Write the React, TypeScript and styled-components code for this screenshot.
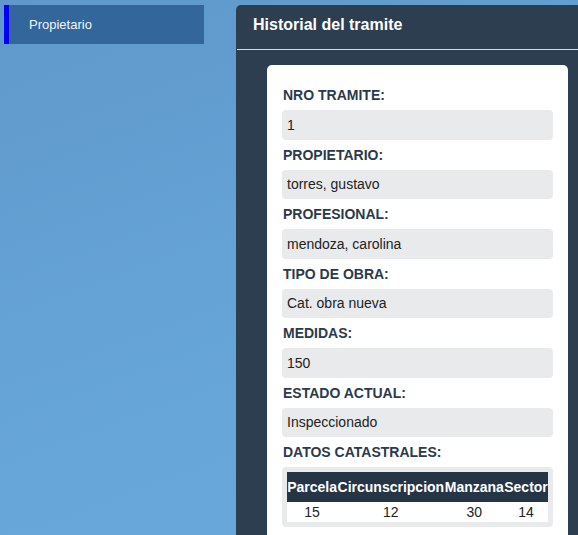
import React from "react";
import styled, { createGlobalStyle } from "styled-components";

const Global = createGlobalStyle`
  html, body { margin: 0; padding: 0; }
  body {
    font-family: "Liberation Sans", Arial, sans-serif;
    background: linear-gradient(160deg, #6098cb 0%, #66a5d8 60%, #68a9dc 100%);
    min-height: 535px;
    overflow: hidden;
  }
`;

const Page = styled.div`
  display: flex;
  align-items: flex-start;
  gap: 32px;
  padding: 5px 0 0 4px;
  height: 530px;
  width: 574px;
`;

const Sidebar = styled.nav`
  flex: 0 0 200px;
  display: flex;
  flex-direction: column;
`;

const NavItem = styled.div<{ $active?: boolean }>`
  height: 39px;
  display: flex;
  align-items: center;
  padding-left: 20px;
  background: #33669a;
  border-left: 5px solid ${(p) => (p.$active ? "#0000ff" : "transparent")};
  color: #f2f5f8;
  font-size: 13px;
`;

const Panel = styled.section`
  flex: 1 1 auto;
  min-width: 0;
  background: #2d3e50;
  border-radius: 5px 0 0 0;
  min-height: 540px;
`;

const PanelHeader = styled.h2`
  margin: 0 0 0 1px;
  padding: 10px 16px 15px;
  line-height: 19px;
  font-size: 16px;
  font-weight: bold;
  color: #ffffff;
  border-bottom: 1px solid #d5dbe1;
`;

const PanelBody = styled.div`
  padding: 15px 0 0 31px;
`;

const Card = styled.div`
  width: 271px;
  background: #ffffff;
  border-radius: 5px;
  padding: 15px 15px 15px;
`;

const Label = styled.div`
  height: 30px;
  display: flex;
  align-items: center;
  padding-left: 1px;
  font-size: 14px;
  font-weight: bold;
  color: #2b3a4b;
`;

const Value = styled.div`
  height: 29.5px;
  display: flex;
  align-items: center;
  padding: 0 5px;
  background: #e9eaec;
  border-radius: 4px;
  font-size: 14px;
  color: #222;
`;

const TableBox = styled.div`
  background: #e9eaec;
  border-radius: 4px;
  padding: 5px;
`;

const Table = styled.table`
  width: 100%;
  border-collapse: collapse;
  font-size: 14px;
`;

const Th = styled.th`
  background: #263546;
  color: #ffffff;
  font-weight: bold;
  height: 30px;
  padding: 0;
  text-align: center;
`;

const Td = styled.td`
  background: #ffffff;
  color: #222;
  height: 20px;
  padding: 0;
  text-align: center;
`;

const fields: [string, string][] = [
  ["NRO TRAMITE:", "1"],
  ["PROPIETARIO:", "torres, gustavo"],
  ["PROFESIONAL:", "mendoza, carolina"],
  ["TIPO DE OBRA:", "Cat. obra nueva"],
  ["MEDIDAS:", "150"],
  ["ESTADO ACTUAL:", "Inspeccionado"],
];

const cols = ["Parcela", "Circunscripcion", "Manzana", "Sector"];
const row = ["15", "12", "30", "14"];

export default function App() {
  return (
    <>
      <Global />
      <Page>
        <Sidebar>
          <NavItem $active>Propietario</NavItem>
        </Sidebar>
        <Panel>
          <PanelHeader>Historial del tramite</PanelHeader>
          <PanelBody>
            <Card>
              {fields.map(([l, v]) => (
                <React.Fragment key={l}>
                  <Label>{l}</Label>
                  <Value>{v}</Value>
                </React.Fragment>
              ))}
              <Label>DATOS CATASTRALES:</Label>
              <TableBox>
                <Table>
                  <thead>
                    <tr>
                      {cols.map((c) => (
                        <Th key={c}>{c}</Th>
                      ))}
                    </tr>
                  </thead>
                  <tbody>
                    <tr>
                      {row.map((c, i) => (
                        <Td key={i}>{c}</Td>
                      ))}
                    </tr>
                  </tbody>
                </Table>
              </TableBox>
            </Card>
          </PanelBody>
        </Panel>
      </Page>
    </>
  );
}
